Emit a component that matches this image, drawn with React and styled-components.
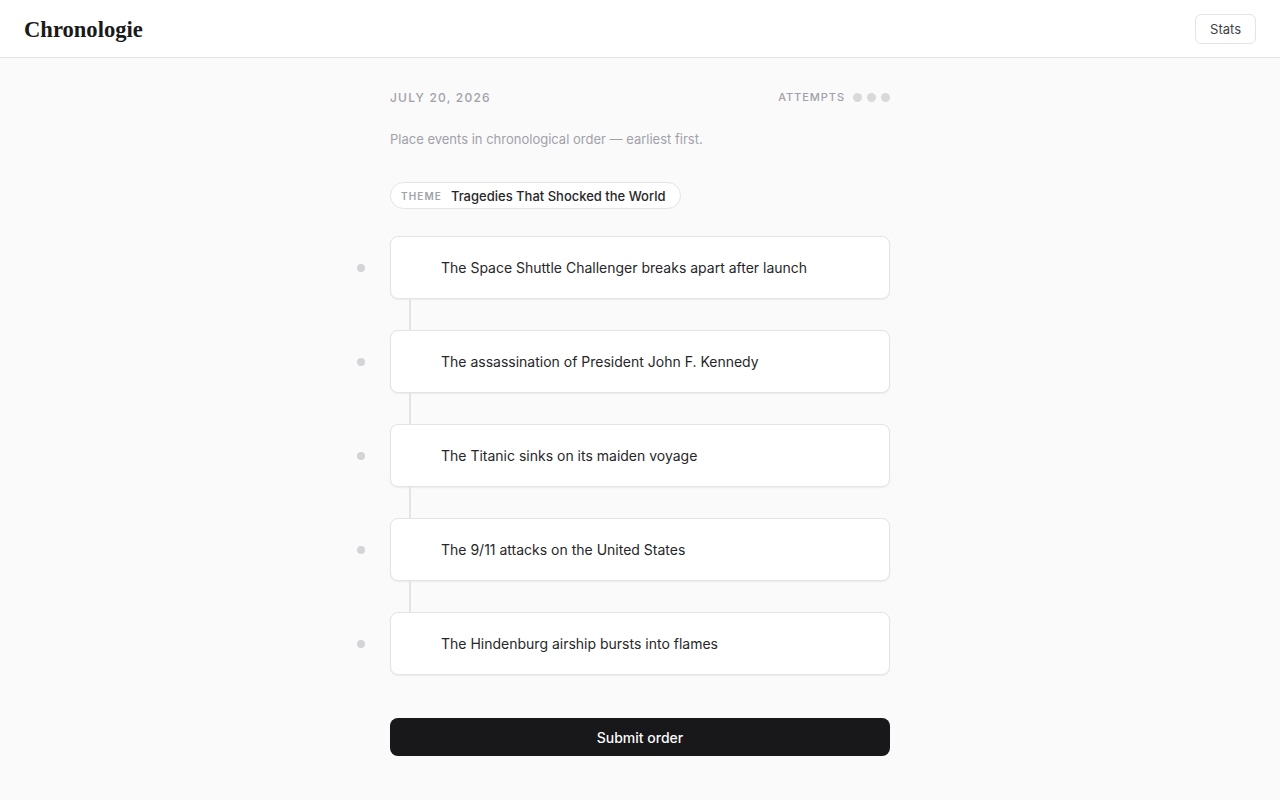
import React from 'react'
import styled, { createGlobalStyle } from 'styled-components'

const GlobalStyle = createGlobalStyle`
  html, body {
    margin: 0;
    padding: 0;
    background: #fafafa;
    font-family: Inter, "Noto Sans", sans-serif;
    color: #18181b;
  }
  * { box-sizing: border-box; }
`;

const Header = styled.header`
  height: 58px;
  background: #fff;
  border-bottom: 1px solid #e5e5e5;
  display: flex;
  align-items: center;
  justify-content: space-between;
  padding: 0 24px;
`;
const Logo = styled.h1`
  margin: 0;
  font-family: "Liberation Serif", "DejaVu Serif", serif;
  font-size: 22.6px;
  font-weight: 700;
  color: #1a1a1a;
  padding-top: 2px;
`;
const StatsButton = styled.button`
  height: 30px;
  padding: 0 14px;
  border: 1px solid #e4e4e7;
  border-radius: 6px;
  background: #fff;
  font-family: inherit;
  font-size: 13px;
  font-weight: 400;
  color: #3f3f46;
`;

const Main = styled.main`
  width: 500px;
  margin: 0 auto;
  padding-top: 30px;
  padding-bottom: 44px;
`;
const TopRow = styled.div`
  display: flex;
  align-items: center;
  justify-content: space-between;
  height: 18px;
`;
const DateLabel = styled.div`
  font-size: 12px;
  font-weight: 500;
  letter-spacing: 1.2px;
  color: #a1a1aa;
`;
const Attempts = styled.div`
  display: flex;
  align-items: center;
  gap: 5px;
  font-size: 11px;
  font-weight: 500;
  letter-spacing: 0.95px;
  color: #a1a1aa;
  & > span { margin-right: 3px; }
`;
const AttemptDot = styled.i`
  width: 9px;
  height: 9px;
  border-radius: 50%;
  background: #d9d9dc;
`;
const Instruction = styled.p`
  margin: 24px 0 0;
  font-size: 13px;
  line-height: 18px;
  color: #a1a1aa;
`;
const ThemePill = styled.div`
  margin-top: 34px;
  display: inline-flex;
  align-items: center;
  gap: 9px;
  height: 27px;
  padding: 0 14px 0 10px;
  background: #fff;
  border: 1px solid #e4e4e7;
  border-radius: 999px;
`;
const ThemeTag = styled.span`
  font-size: 10px;
  font-weight: 600;
  letter-spacing: 1.1px;
  color: #a1a1aa;
`;
const ThemeName = styled.span`
  font-size: 13px;
  font-weight: 500;
  color: #27272a;
`;
const List = styled.div`
  margin-top: 27px;
  display: flex;
  flex-direction: column;
`;
const Row = styled.div`
  display: flex;
  align-items: center;
  margin-left: -33px;
  gap: 25px;
`;
const Dot = styled.span`
  flex: none;
  width: 8px;
  height: 8px;
  border-radius: 50%;
  background: #d4d4d8;
`;
const Card = styled.div`
  flex: 1;
  height: 63px;
  display: flex;
  align-items: center;
  padding-left: 50px;
  background: #fff;
  border: 1px solid #e4e4e7;
  border-radius: 8px;
  box-shadow: 0 1px 2px rgba(0, 0, 0, 0.06);
  font-size: 14px;
  color: #27272a;
`;
const Connector = styled.div`
  width: 2px;
  height: 31px;
  margin-left: 19px;
  background: #e4e4e7;
`;
const Submit = styled.button`
  margin-top: 43px;
  width: 100%;
  height: 38px;
  border: none;
  border-radius: 8px;
  background: #18181b;
  color: #fafafa;
  font-family: inherit;
  font-size: 14px;
  font-weight: 500;
`;

const events = [
  'The Space Shuttle Challenger breaks apart after launch',
  'The assassination of President John F. Kennedy',
  'The Titanic sinks on its maiden voyage',
  'The 9/11 attacks on the United States',
  'The Hindenburg airship bursts into flames',
]

export default function App() {
  return (
    <>
      <GlobalStyle />
      <Header>
        <Logo>Chronologie</Logo>
        <StatsButton>Stats</StatsButton>
      </Header>
      <Main>
        <TopRow>
          <DateLabel>JULY 20, 2026</DateLabel>
          <Attempts>
            <span>ATTEMPTS</span>
            <AttemptDot />
            <AttemptDot />
            <AttemptDot />
          </Attempts>
        </TopRow>
        <Instruction>Place events in chronological order — earliest first.</Instruction>
        <ThemePill>
          <ThemeTag>THEME</ThemeTag>
          <ThemeName>Tragedies That Shocked the World</ThemeName>
        </ThemePill>
        <List>
          {events.map((e, i) => (
            <React.Fragment key={e}>
              {i > 0 && <Connector />}
              <Row>
                <Dot />
                <Card>{e}</Card>
              </Row>
            </React.Fragment>
          ))}
        </List>
        <Submit>Submit order</Submit>
      </Main>
    </>
  )
}
